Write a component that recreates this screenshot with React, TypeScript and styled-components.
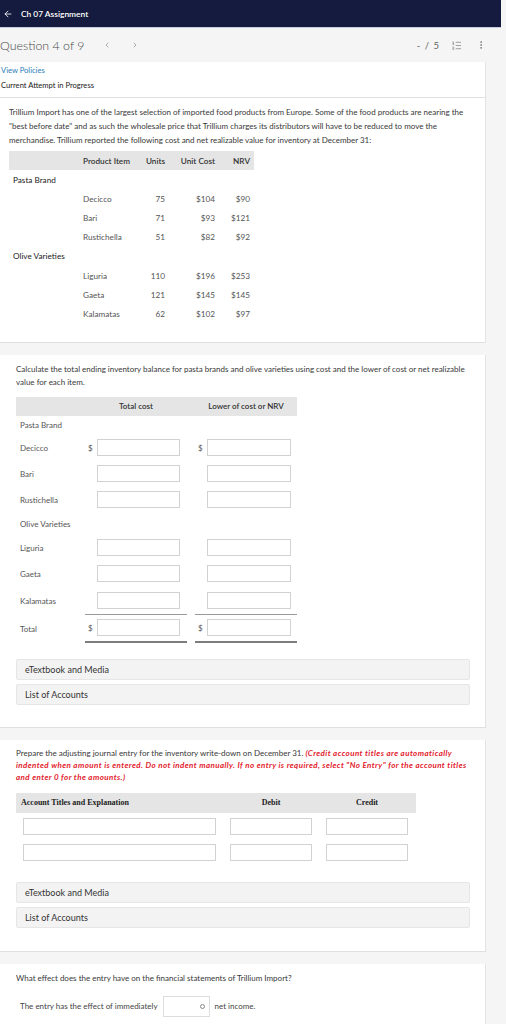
import React from "react";
import styled, { createGlobalStyle } from "styled-components";
import { ArrowLeft, ChevronLeft, ChevronRight, ListOrdered, EllipsisVertical } from "lucide-react";

const GlobalStyle = createGlobalStyle`
  body {
    margin: 0;
    background: #f5f5f5;
    font-family: Lato, "Open Sans", sans-serif;
    color: #333;
  }
  * { box-sizing: border-box; }
`;

const Page = styled.div`
  width: 506px;
  min-height: 1024px;
  background: #f5f5f5;
  overflow: hidden;
`;

const TopBar = styled.header`
  width: 501px;
  height: 28px;
  background: #141b3e;
  border-bottom: 1px solid #c9cce0;
  display: flex;
  align-items: center;
  gap: 8px;
  padding-left: 3px;
  color: #fff;
  font-size: 8.4px;
  font-weight: 600;
`;

const Main = styled.main`
  width: 486px;
`;

const QuestionBar = styled.div`
  height: 34px;
  display: flex;
  align-items: center;
  color: #555;
`;

const QuestionTitle = styled.span`
  font-size: 12.4px;
  font-weight: 300;
  color: #4a4a4a;
`;

const NavButton = styled.span<{ $ml: number }>`
  display: flex;
  align-items: center;
  margin-left: ${(p) => p.$ml}px;
  color: #888;
`;

const Score = styled.span`
  margin-left: auto;
  font-size: 9.5px;
  color: #666;
  letter-spacing: 1px;
`;

const IconSlot = styled.span<{ $ml: number }>`
  display: flex;
  align-items: center;
  margin-left: ${(p) => p.$ml}px;
  color: #777;
`;

const Card = styled.section<{ $gap?: number; $pt?: number; $pb?: number; $pl?: number }>`
  background: #fff;
  border-right: 1px solid #e4e4e4;
  border-bottom: 1px solid #e0e0e0;
  margin-bottom: ${(p) => p.$gap ?? 12}px;
  padding: ${(p) => p.$pt ?? 8}px 15px ${(p) => p.$pb ?? 18}px ${(p) => p.$pl ?? 16}px;
`;

const PolicyLink = styled.div`
  color: #2b7bb9;
  font-size: 7.6px;
  line-height: 15px;
`;

const AttemptText = styled.div`
  color: #1a1a1a;
  font-size: 7.6px;
  line-height: 15px;
`;

const Paragraph = styled.p<{ $lh?: number }>`
  margin: 0;
  font-size: 8px;
  line-height: ${(p) => p.$lh ?? 14}px;
  color: #383838;
`;

const Alert = styled.span`
  color: #e21b2d;
  font-weight: 700;
  font-style: italic;
  letter-spacing: 0.4px;
`;

/* ---- cost table ---- */
const CostTable = styled.div`
  margin-top: 4px;
  width: 245px;
  display: grid;
  grid-template-columns: 70px 54px 36px 50px 35px;
  font-size: 8.2px;
`;

const CostHead = styled.div<{ $align?: string }>`
  background: #e5e5e5;
  height: 19px;
  display: flex;
  align-items: center;
  justify-content: ${(p) => p.$align ?? "flex-start"};
  padding: 0 4px;
  font-weight: 600;
  color: #333;
  white-space: nowrap;
`;

const CostCell = styled.div<{ $align?: string; $dark?: boolean }>`
  height: 19.2px;
  display: flex;
  align-items: center;
  justify-content: ${(p) => p.$align ?? "flex-start"};
  padding: 0 4px;
  white-space: nowrap;
  color: ${(p) => (p.$dark ? "#222" : "#555")};
`;

/* ---- answer table ---- */
const AnswerTable = styled.div`
  margin-top: 7.5px;
  width: 281px;
  display: grid;
  grid-template-columns: 69px 102px 8px 102px;
  font-size: 8px;
  color: #555;
`;

const AnswerHead = styled.div`
  background: #e5e5e5;
  height: 19px;
  display: flex;
  align-items: center;
  justify-content: center;
  font-weight: 600;
  color: #333;
  white-space: nowrap;
`;

const AnswerLabel = styled.div<{ $h: number }>`
  height: ${(p) => p.$h}px;
  display: flex;
  align-items: center;
  padding-left: 4px;
  white-space: nowrap;
`;

const AnswerCell = styled.div<{ $h: number; $rule?: "thin" | "thick" }>`
  height: ${(p) => p.$h}px;
  display: flex;
  align-items: center;
  border-bottom: ${(p) =>
    p.$rule === "thin" ? "1px solid #9a9a9a" : p.$rule === "thick" ? "2px solid #7d7d7d" : "none"};
`;

const Dollar = styled.span`
  width: 12px;
  padding-left: 3px;
  color: #555;
`;

const Box = styled.div<{ $w?: number; $h?: number }>`
  width: ${(p) => (p.$w ? `${p.$w}px` : "auto")};
  height: ${(p) => p.$h ?? 17}px;
  border: 1px solid #d2d2d2;
  background: #fff;
`;

/* ---- accordions ---- */
const Accordion = styled.div<{ $mt: number }>`
  margin-top: ${(p) => p.$mt}px;
  width: 454px;
  height: 21px;
  background: #f3f3f3;
  border: 1px solid #e6e6e6;
  border-radius: 2px;
  display: flex;
  align-items: center;
  padding-left: 8px;
  font-size: 9px;
  color: #333;
`;

/* ---- journal ---- */
const Journal = styled.div`
  margin-top: 10px;
  width: 400px;
`;

const JournalGrid = styled.div<{ $mt?: number }>`
  display: grid;
  grid-template-columns: 193px 82px 82px;
  column-gap: 14px;
  padding-left: 7px;
  margin-top: ${(p) => p.$mt ?? 0}px;
`;

const JournalHead = styled(JournalGrid)`
  height: 20px;
  align-items: center;
  background: #e5e5e5;
  font-family: "Liberation Serif", serif;
  font-weight: 700;
  font-size: 8px;
  color: #222;
`;

const JournalTitle = styled.span<{ $center?: boolean }>`
  text-align: ${(p) => (p.$center ? "center" : "left")};
  margin-left: ${(p) => (p.$center ? 0 : -2)}px;
  white-space: nowrap;
`;

/* ---- effect ---- */
const EffectLine = styled.div`
  margin-top: 11px;
  padding-left: 4px;
  display: flex;
  align-items: center;
  gap: 5px;
  font-size: 8px;
  color: #444;
`;

const SelectBox = styled.div`
  width: 47px;
  height: 21px;
  border: 1px solid #ddd;
  display: flex;
  align-items: center;
  justify-content: flex-end;
  padding-right: 4px;
`;

const SelectDot = styled.span`
  width: 5px;
  height: 5px;
  border: 1px solid #888;
  border-radius: 50%;
`;

const costRows: { cat?: string; item?: string; units?: string; cost?: string; nrv?: string }[] = [
  { cat: "Pasta Brand" },
  { item: "Decicco", units: "75", cost: "$104", nrv: "$90" },
  { item: "Bari", units: "71", cost: "$93", nrv: "$121" },
  { item: "Rustichella", units: "51", cost: "$82", nrv: "$92" },
  { cat: "Olive Varieties" },
  { item: "Liguria", units: "110", cost: "$196", nrv: "$253" },
  { item: "Gaeta", units: "121", cost: "$145", nrv: "$145" },
  { item: "Kalamatas", units: "62", cost: "$102", nrv: "$97" },
];

type AnswerRow = { label: string; h: number; input?: boolean; dollar?: boolean; rule?: "thin" | "thick" };

const answerRows: AnswerRow[] = [
  { label: "Pasta Brand", h: 19 },
  { label: "Decicco", h: 26, input: true, dollar: true },
  { label: "Bari", h: 26, input: true },
  { label: "Rustichella", h: 26, input: true },
  { label: "Olive Varieties", h: 22 },
  { label: "Liguria", h: 26, input: true },
  { label: "Gaeta", h: 26, input: true },
  { label: "Kalamatas", h: 28, input: true, rule: "thin" },
  { label: "Total", h: 28, input: true, dollar: true, rule: "thick" },
];

export default function App() {
  return (
    <Page>
      <GlobalStyle />
      <TopBar>
        <ArrowLeft size={10} strokeWidth={2} />
        <span>Ch 07 Assignment</span>
      </TopBar>
      <Main>
        <QuestionBar>
          <QuestionTitle>Question 4 of 9</QuestionTitle>
          <NavButton $ml={19}>
            <ChevronLeft size={8} />
          </NavButton>
          <NavButton $ml={20}>
            <ChevronRight size={8} />
          </NavButton>
          <Score>- / 5</Score>
          <IconSlot $ml={11}>
            <ListOrdered size={11} strokeWidth={1.5} />
          </IconSlot>
          <IconSlot $ml={14}>
            <EllipsisVertical size={10} strokeWidth={2} />
          </IconSlot>
        </QuestionBar>

        <Card $gap={0} $pt={1} $pb={4} $pl={1}>
          <PolicyLink>View Policies</PolicyLink>
          <AttemptText>Current Attempt in Progress</AttemptText>
        </Card>

        <Card $pt={7} $pb={18} $pl={9}>
          <Paragraph>
            Trillium Import has one of the largest selection of imported food products from Europe. Some of the food
            products are nearing the "best before date" and as such the wholesale price that Trillium charges its
            distributors will have to be reduced to move the merchandise. Trillium reported the following cost and net
            realizable value for inventory at December 31:
          </Paragraph>
          <CostTable>
            <CostHead />
            <CostHead>Product Item</CostHead>
            <CostHead $align="flex-end">Units</CostHead>
            <CostHead $align="flex-end">Unit Cost</CostHead>
            <CostHead $align="flex-end">NRV</CostHead>
            {costRows.map((r, i) => (
              <React.Fragment key={i}>
                <CostCell $dark>{r.cat ?? ""}</CostCell>
                <CostCell>{r.item ?? ""}</CostCell>
                <CostCell $align="flex-end">{r.units ?? ""}</CostCell>
                <CostCell $align="flex-end">{r.cost ?? ""}</CostCell>
                <CostCell $align="flex-end">{r.nrv ?? ""}</CostCell>
              </React.Fragment>
            ))}
          </CostTable>
        </Card>

        <Card $pt={8.5} $pb={22}>
          <Paragraph $lh={13}>
            Calculate the total ending inventory balance for pasta brands and olive varieties using cost and the lower of
            cost or net realizable value for each item.
          </Paragraph>
          <AnswerTable>
            <AnswerHead />
            <AnswerHead>Total cost</AnswerHead>
            <AnswerHead />
            <AnswerHead>Lower of cost or NRV</AnswerHead>
            {answerRows.map((r) => (
              <React.Fragment key={r.label}>
                <AnswerLabel $h={r.h}>{r.label}</AnswerLabel>
                <AnswerCell $h={r.h} $rule={r.rule}>
                  {r.input && (
                    <>
                      <Dollar>{r.dollar ? "$" : ""}</Dollar>
                      <Box $w={83} />
                    </>
                  )}
                </AnswerCell>
                <AnswerCell $h={r.h} />
                <AnswerCell $h={r.h} $rule={r.rule}>
                  {r.input && (
                    <>
                      <Dollar>{r.dollar ? "$" : ""}</Dollar>
                      <Box $w={84} />
                    </>
                  )}
                </AnswerCell>
              </React.Fragment>
            ))}
          </AnswerTable>
          <Accordion $mt={16}>eTextbook and Media</Accordion>
          <Accordion $mt={4}>List of Accounts</Accordion>
        </Card>

        <Card $pt={7} $pb={23}>
          <Paragraph $lh={12}>
            Prepare the adjusting journal entry for the inventory write-down on December 31.{" "}
            <Alert>
              (Credit account titles are automatically indented when amount is entered. Do not indent manually. If no
              entry is required, select "No Entry" for the account titles and enter 0 for the amounts.)
            </Alert>
          </Paragraph>
          <Journal>
            <JournalHead>
              <JournalTitle>Account Titles and Explanation</JournalTitle>
              <JournalTitle $center>Debit</JournalTitle>
              <JournalTitle $center>Credit</JournalTitle>
            </JournalHead>
            {[5, 9].map((mt) => (
              <JournalGrid key={mt} $mt={mt}>
                <Box />
                <Box />
                <Box />
              </JournalGrid>
            ))}
          </Journal>
          <Accordion $mt={21}>eTextbook and Media</Accordion>
          <Accordion $mt={4}>List of Accounts</Accordion>
        </Card>

        <Card $pt={7} $pb={30}>
          <Paragraph>What effect does the entry have on the financial statements of Trillium Import?</Paragraph>
          <EffectLine>
            <span>The entry has the effect of immediately</span>
            <SelectBox>
              <SelectDot />
            </SelectBox>
            <span>net income.</span>
          </EffectLine>
        </Card>
      </Main>
    </Page>
  );
}
